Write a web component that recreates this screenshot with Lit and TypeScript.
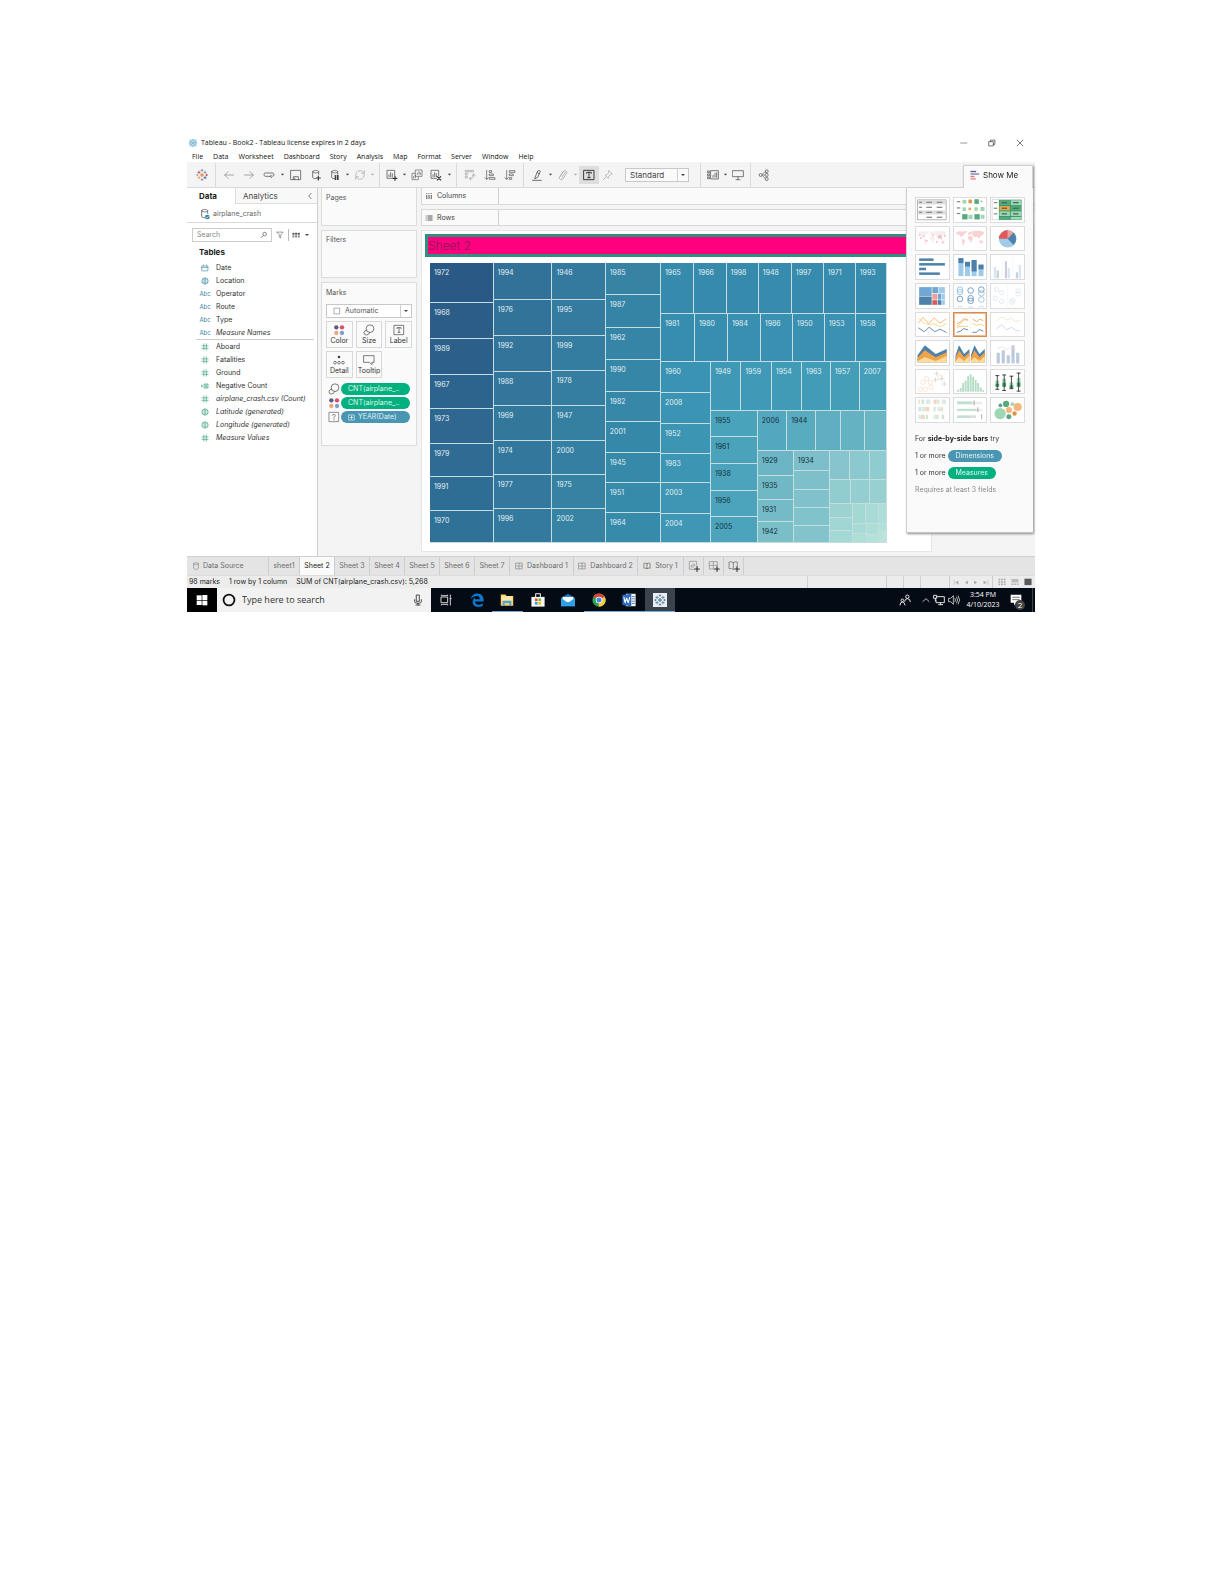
import { LitElement, html, svg, css, nothing, TemplateResult, SVGTemplateResult } from "lit";
import { customElement, state } from "lit/decorators.js";
import { classMap } from "lit/directives/class-map.js";

const G = "#5a5a5a";
const line = (d: string, stroke = G, w = 1) =>
  svg`<path d=${d} fill="none" stroke=${stroke} stroke-width=${w} stroke-linecap="round" stroke-linejoin="round"/>`;
const rect = (x: number, y: number, w: number, h: number, fill: string) =>
  svg`<rect x=${x} y=${y} width=${w} height=${h} fill=${fill}/>`;
const dot = (x: number, y: number, r: number, fill: string) =>
  svg`<circle cx=${x} cy=${y} r=${r} fill=${fill}/>`;
const ring = (x: number, y: number, r: number, stroke: string, w = 2) =>
  svg`<circle cx=${x} cy=${y} r=${r} fill="none" stroke=${stroke} stroke-width=${w}/>`;

const plusMark = (x: number, y: number, r: number, c: string, w = 2) =>
  line(`M${x - r} ${y}H${x + r}M${x} ${y - r}V${y + r}`, c, w);

const tableauMark = (mono?: string) => svg`
  ${plusMark(18, 18, 5, mono ?? "#e8762c", 3)}
  ${plusMark(9, 10, 3.5, mono ?? "#c72035", 2)}${plusMark(27, 10, 3.5, mono ?? "#5b879b", 2)}
  ${plusMark(9, 26, 3.5, mono ?? "#eb912c", 2)}${plusMark(27, 26, 3.5, mono ?? "#1f457e", 2)}
  ${plusMark(18, 4, 2.5, mono ?? "#5b6591", 2)}${plusMark(18, 32, 2.5, mono ?? "#5b6591", 2)}
  ${plusMark(4, 18, 2.5, mono ?? "#7099a6", 2)}${plusMark(32, 18, 2.5, mono ?? "#c72035", 2)}`;

const cylinder = svg`${line("M8 8v17c0 3 5 4 9 4M26 8v8M8 8c0-5 18-5 18 0s-18 5-18 0", G, 2.4)}`;
const chartFrame = svg`${line("M26 21V4H3v24h17M9 23v-6M14 23V11M19 23v-9", G, 2.4)}`;

/* Glyphs on a 36-unit square. */
const glyphs: Record<string, SVGTemplateResult> = {
  tableau: tableauMark(),
  tableauBlue: svg`${rect(0, 0, 36, 36, "#d9edf6")}${tableauMark("#3f93bd")}`,
  tableauWhite: svg`${rect(0, 0, 36, 36, "#e9eef2")}<g transform="translate(3 3) scale(.84)">${tableauMark("#3a6a8c")}</g>`,
  back: line("M32 18H5M15 8L5 18l10 10", "#999", 2.6),
  forward: line("M4 18h27M21 8l10 10-10 10", "#999", 2.6),
  redo: line("M24 22H7q-4 0-4-5t4-5h22q4 0 4 5t-4 5M26 18l-4 4 4 4", G, 2.4),
  save: svg`${line("M3 4h29v28H3zM10 32v-9h15v9M14 32v-5", G, 2.4)}`,
  dbPlus: svg`${cylinder}${plusMark(25, 27, 6, "#333", 3.4)}`,
  dbPause: svg`${cylinder}${rect(17, 18, 5, 15, "#444")}${rect(24, 18, 5, 15, "#444")}`,
  refresh: svg`${line("M5 20C3 4 24 0 30 12M31 16c2 16-19 20-25 8M31 5v8h-8M5 31v-8h8", "#aaa", 2.2)}`,
  chartPlus: svg`${chartFrame}${plusMark(27, 28, 6, "#333", 3.4)}`,
  chartClear: svg`${chartFrame}${line("M22 23l10 10M32 23L22 33", "#333", 3.4)}`,
  duplicate: svg`${line("M14 3h19v19H14zM12 13H3v19h19v-8M8 27v-5M13 27v-8M19 16v-4M24 16V8M28 16v-5", G, 2)}`,
  swap: svg`${line("M5 4h5v5H5zM14 4h5v5h-5zM23 4h5v5h-5zM5 13h5v5H5zM5 22h5v5H5z", "#999", 1.8)}${line("M29 16q3 12-12 13M25 20l4-5 5 5M21 25l-5 4 5 4", "#999", 2)}`,
  sortAsc: svg`${line("M8 4v27M3 26l5 5 5-5M17 5h6v5h-6zM17 15h11v5H17zM17 26h16v5H17z", G, 2.2)}`,
  sortDesc: svg`${line("M8 4v27M3 26l5 5 5-5M17 5h16v5H17zM17 15h11v5H17zM17 26h6v5h-6z", G, 2.2)}`,
  highlight: svg`${line("M12 26L20 6q4-4 8 1l-8 18-8 4zM19 11l6 3M5 34h26", G, 2.6)}`,
  clip: svg`${line("M10 22L20 6q7-4 10 4L18 30q-8 5-12-3L18 8M15 25l10-15", "#aaa", 2.4)}`,
  text: svg`${line("M3 4h30v28H3z", "#333", 2.8)}${line("M11 13v-3h14v3M18 10v16M14 26h8", "#333", 2.8)}`,
  pin: svg`${line("M20 5l11 10-5 1-6 6-1 6-10-9 6-2 5-6zM12 24l-8 8", "#aaa", 2.2)}`,
  fit: svg`${line("M2 6h6v5H2zM2 15h6v5H2zM2 24h6v5H2zM12 5h22v25H12zM18 25v-6M24 25V13M29 25V11", G, 2.4)}`,
  present: svg`${line("M2 5h32v18H2zM18 23v9M12 32h12", G, 2.4)}`,
  share: svg`${line("M12 18h8M14 15l8-7M14 21l8 7", G, 2)}${ring(8, 18, 4.5, G, 2.4)}${[3, 14, 26].map((y) => svg`<rect x="22" y=${y} width="8" height="8" rx="2" fill="none" stroke=${G} stroke-width="2.4"/>`)}`,
  caret: svg`<path d="M9 14h18l-9 9z" fill="#444"/>`,
  caretLight: svg`<path d="M9 14h18l-9 9z" fill="#aaa"/>`,
  chevron: line("M23 6L12 18l11 12", "#444", 3),
  source: svg`${cylinder}${dot(25, 27, 7, "#2f7f9f")}${line("M22 27l2 3 5-6", "#fff", 2)}`,
  search: svg`${ring(21, 14, 8, "#555", 3)}${line("M15 20L5 30", "#555", 3)}`,
  filter: line("M4 5h28L21 18v14l-6-4V18z", "#555", 2.5),
  grid: svg`${[0, 1, 2].map((i) => rect(2 + i * 12, 8, 9, 9, "#555"))}${[0, 1, 2].map((i) => rect(2 + i * 12, 20, 9, 9, "#888"))}`,
  date: svg`${line("M5 9h26v22H5zM5 16h26M11 4v5M25 4v5", "#4a8fa8", 3)}`,
  geoBlue: svg`${ring(18, 18, 14, "#3c87a5", 3)}${line("M5 13h26M5 23h26M15 5v26M21 5v26", "#3c87a5", 2)}`,
  geoGreen: svg`${ring(18, 18, 14, "#3fa57c", 3)}${line("M5 13h26M5 23h26M15 5v26M21 5v26", "#3fa57c", 2)}`,
  hash: line("M13 4v28M24 4v28M4 13h28M4 24h28", "#3fa57c", 3),
  calcHash: svg`${line("M18 6v24M27 6v24M11 13h24M11 23h24", "#3fa57c", 3)}${line("M0 18h7M3 14v8", "#3fa57c", 3)}`,
  color: svg`${dot(10, 10, 6.5, "#5d5b85")}${dot(27, 10, 6.5, "#d94f6b")}${dot(10, 27, 6.5, "#efa377")}${dot(27, 27, 6.5, "#7d9fc9")}`,
  size: svg`${line("M11 18Q4 19 3 26q0 7 7 7 8 0 10-7", G, 2.4)}${ring(21, 14, 11.5, G, 2.4)}`,
  label: svg`${line("M4 4h28v28H4z", G, 2.4)}${line("M12 14v-3h12v3M18 11v14M15 25h6", G, 2.4)}`,
  detail: svg`${dot(18, 9, 4, "#444")}${ring(6, 26, 4, G, 2.4)}${ring(18, 26, 4, G, 2.4)}${ring(30, 26, 4, G, 2.4)}`,
  tooltip: line("M3 5h30v20h-6v7l-8-7H3z", G, 2.4),
  columns: svg`${[6, 16, 26].map((x) => svg`${rect(x, 5, 4, 4, "#444")}${rect(x, 13, 4, 19, "#444")}`)}`,
  rows: svg`${[7, 16, 25].map((y) => svg`${rect(3, y, 4, 4, "#444")}${rect(11, y, 23, 4, "#444")}`)}`,
  bars: svg`${rect(2, 3, 20, 5, "#5b5f8c")}${rect(2, 12, 31, 5, "#7d83ad")}${rect(2, 21, 14, 5, "#e2706e")}${rect(2, 30, 19, 4, "#e2706e")}`,
  dashboard: line("M4 5h28v26H4zM18 5v26M4 18h28", "#777", 2.5),
  story: line("M18 8v22M18 8Q10 2 4 6v22q8-2 14 2 6-4 14-2V6q-8-4-14 2", "#555", 2.8),
  newSheet: svg`${line("M26 16V4H4v24h14M10 22v-6M15 22V12M20 18v-5", "#888", 2)}${plusMark(27, 27, 7, "#333", 3.4)}`,
  newDash: svg`${line("M28 16V5H4v22h14M16 5v22M4 16h24", "#888", 2)}${plusMark(27, 27, 7, "#333", 3.4)}`,
  newStory: svg`${line("M16 8v20M16 8Q9 3 3 6v20q8-2 13 2M16 8q6-5 12-2v10", "#777", 2.5)}${plusMark(27, 27, 7, "#333", 3.4)}`,
  db: svg`${line("M7 8v20c0 6 22 6 22 0V8M7 8c0-6 22-6 22 0s-22 6-22 0", "#777", 2.5)}`,
  minimize: line("M3 18h28", "#444", 2.5),
  restore: line("M5 12h19v19H5zM11 12V5h20v19h-7", "#333", 3),
  close: line("M5 5l26 26M31 5L5 31", "#333", 3),
  windows: svg`${rect(2, 4, 15, 14, "#fff")}${rect(19, 3, 15, 15, "#fff")}${rect(2, 20, 15, 13, "#fff")}${rect(19, 20, 15, 14, "#fff")}`,
  cortana: ring(18, 18, 14, "#111", 4.6),
  mic: svg`${line("M14 3h8v19h-8zM8 17v6q0 5 10 5t10-5v-6M18 28v5M12 33h12", "#333", 2.6)}`,
  taskview: svg`${line("M4 9h19v17H4zM4 3v2h19V3M4 33v-2h19v2M31 3v6M31 17v16", "#eee", 2.6)}${rect(29, 11, 5, 5, "#eee")}`,
  edge: svg`<path d="M2 16C4 6 11 1 19 1c10 0 16 7 16 18v3H13c0 6 4 8 10 8 4 0 7-1 10-3v6c-3 2-8 3-12 3C11 36 6 29 7 22c0-5 3-9 7-11-1 2-2 3-2 5h13c0-5-2-8-7-8C12 8 6 11 2 16z" fill="#0b78d0"/>`,
  folder: svg`<path d="M2 4h12l3 4h17v25H2z" fill="#f3cf6b"/>${rect(4, 8, 28, 12, "#fbe7a3")}<path d="M7 33V20h22v13h-5v-7H12v7z" fill="#4ba3d8"/>`,
  store: svg`<path d="M1 10h34v25H1z" fill="#f7f7f7"/>${line("M12 10V2h12v8", "#f7f7f7", 2.6)}${rect(10, 14, 7, 7, "#e8502f")}${rect(19, 14, 7, 7, "#7cb82f")}${rect(10, 23, 7, 7, "#2a9fe0")}${rect(19, 23, 7, 7, "#f5b81c")}`,
  mail: svg`<path d="M0 13L18 2l18 11v21H0z" fill="#1477c4"/><path d="M4 10h28v14H4z" fill="#fff"/><path d="M0 13l18 12 18-12v21H0z" fill="#2ba0e6"/>`,
  chrome: svg`${dot(18, 18, 17, "#2da04f")}<path d="M18 18L3.300 9.500A17 17 0 0 1 32.700 9.500z" fill="#dc4437"/><path d="M18 18L32.700 9.500A17 17 0 0 1 17 35z" fill="#f9cb3c"/>${dot(18, 18, 8.5, "#fff")}${dot(18, 18, 6.5, "#4285e8")}`,
  word: svg`${rect(10, 2, 25, 32, "#f5f8fc")}${[8, 14, 20, 26].map((y) => rect(26, y, 7, 2, "#2b579a"))}<path d="M1 5l23-3v32L1 31z" fill="#2b6cc0"/>${line("M5 11l3 14 4-12 4 12 4-14", "#fff", 2.8)}`,
  people: svg`${ring(25, 8, 5, "#eee", 2.8)}${line("M17 22q0-8 8-8 9 0 9 9", "#eee", 2.8)}${ring(10, 19, 4, "#eee", 2.8)}${line("M3 33q0-9 7-9t8 9", "#eee", 2.8)}`,
  up: line("M4 25L18 12l14 13", "#eee", 3.4),
  monitor: svg`${line("M12 8h22v18H9V18M17 32h12M22 26v6M3 4h8v9H3zM7 13v8", "#eee", 2.8)}`,
  sound: svg`${line("M3 13h5l8-8v26l-8-8H3zM21 13q4 5 0 10M26 9q6 9 0 18M31 6q8 12 0 24", "#ddd", 2.4)}`,
  first: svg`${line("M6 8v20", "#aaa", 3)}<path d="M28 8v20L12 18z" fill="#aaa"/>`,
  prev: svg`<path d="M25 8v20L10 18z" fill="#aaa"/>`,
  next: svg`<path d="M11 8v20l15-10z" fill="#aaa"/>`,
  last: svg`${line("M30 8v20", "#aaa", 3)}<path d="M8 8v20l16-10z" fill="#aaa"/>`,
  viewGrid: svg`${[3, 14, 25].map((y) => [2, 14, 26].map((x) => rect(x, y, 8, 7, "#aaa")))}`,
  viewStrip: svg`${rect(2, 4, 32, 16, "#bbb")}${[2, 14, 26].map((x) => rect(x, 25, 8, 6, "#aaa"))}`,
  viewFull: rect(2, 3, 32, 29, "#5a5a5a"),
  checkbox: line("M6 5h24v26H6z", "#777", 2.6),
  boxed: svg`${line("M4 4h28v28H4z", "#777", 2.4)}${line("M13 13q1-4 6-3 5 2 2 6l-3 3v3M18 26v1", "#666", 2.4)}`,
  expand: svg`${line("M4 5h28v26H4z", "#fff", 3)}${line("M11 18h14M18 11v14", "#fff", 3.4)}`,
};

const icon = (name: string, size = "m") =>
  html`<svg class="icon ${size}" viewBox="0 0 36 36" aria-hidden="true">${glyphs[name]}</svg>`;

/* Chart-type thumbnails, drawn on a 104 x 76 canvas. */
const BL = "#4e81a8", LB = "#a0cbe8", OR = "#f2a24a", RD = "#e15759", GN = "#59a77f", LG = "#9fd6b4";
const tiny = (x: number, y: number, w: number, c = "#888") => rect(x, y, w, 4, c);
const worldPath = "M6 18q10-6 22-3l10-3 4 4-8 6-6 8-6 2-4-6-8-2zM26 38l9 4-2 10-4 8-4-10zM44 20l8-6 6 4-4 6-8 2zM45 30l12-1 3 8-6 14-5-8-5-5zM58 14q18-5 38 2l-4 10-8 4-4 8-6-7-8 2-8-8zM80 44l10-1 3 8-10 2z";
const area = (x: number, w: number) => svg`
  <path d="M${x} 46L${x + w * .25} 14 ${x + w * .62} 42 ${x + w} 26V68H${x}z" fill=${BL}/>
  <path d="M${x} 54L${x + w * .25} 30 ${x + w * .62} 52 ${x + w} 36V68H${x}z" fill=${OR}/>
  <path d="M${x} 64L${x + w * .25} 52 ${x + w * .62} 64 ${x + w} 48V68H${x}z" fill="#fbdc9a"/>`;

interface ChartType { name: string; art: SVGTemplateResult; selected?: boolean; }
const chartTypes: ChartType[] = [
  { name: "Text table", art: svg`${line("M6 6h90v64H6z", "#888", 2)}${rect(7, 8, 88, 13, "#ddd")}${rect(7, 40, 88, 13, "#ddd")}
    ${[12, 28, 44, 60].map((y) => svg`${y < 60 ? tiny(10, y, 9) : nothing}${tiny(33, y, 18)}${tiny(66, y, 18)}`)}` },
  { name: "Heat map", art: svg`${[10, 30, 48].map((y) => tiny(9, y, 11))}
    ${rect(27, 6, 12, 12, LG)}${rect(46, 5, 11, 12, "#df9440")}${rect(65, 4, 14, 15, GN)}${rect(84, 8, 7, 6, LG)}
    ${rect(27, 30, 11, 12, LG)}${rect(46, 31, 8, 8, OR)}${rect(65, 30, 11, 11, LG)}${rect(84, 29, 13, 13, LG)}
    ${rect(26, 52, 17, 17, GN)}${rect(46, 54, 13, 14, LG)}${rect(65, 52, 17, 17, GN)}${rect(85, 54, 12, 13, LG)}` },
  { name: "Highlight table", art: svg`${line("M5 5h92v65H5z", "#bbb", 1.5)}${rect(25, 6, 72, 64, "#396")}${rect(27, 7, 33, 16, GN)}${rect(63, 7, 33, 16, LG)}${rect(27, 26, 33, 14, OR)}${rect(63, 26, 33, 14, GN)}${rect(27, 43, 33, 15, LG)}${rect(63, 43, 33, 15, LG)}${rect(27, 61, 33, 8, GN)}${rect(63, 61, 33, 8, LG)}
    ${[13, 31, 49].map((y) => svg`${tiny(9, y, 11)}${tiny(34, y, 17, "#3b6b52")}${tiny(70, y, 18, "#3b6b52")}`)}` },
  { name: "Symbol map", art: svg`<path d=${worldPath} fill="#f7eeee"/>${[[12, 26], [24, 30], [34, 44], [54, 26], [72, 34], [76, 30], [80, 37], [92, 28], [85, 50], [66, 48], [16, 36]].map(([x, y], i) => dot(x, y, i === 5 ? 5 : 3, "#f2b8bd"))}` },
  { name: "Filled map", art: svg`<path d=${worldPath} fill="#f9d3d3"/>` },
  { name: "Pie chart", art: svg`${dot(53, 38, 28, LB)}<path d="M53 38V10a28 28 0 0 1 19 8z" fill="#f39c98"/><path d="M53 38L72 18a28 28 0 0 1 0 40z" fill=${BL}/><path d="M53 38H25A28 28 0 0 1 53 10z" fill=${RD}/>` },
  { name: "Horizontal bars", art: svg`${rect(10, 11, 46, 8, BL)}${rect(10, 26, 82, 8, BL)}${rect(10, 41, 22, 8, BL)}${rect(10, 56, 66, 8, BL)}` },
  { name: "Stacked bars", art: svg`${rect(14, 10, 16, 58, LB)}${rect(14, 10, 16, 16, BL)}${rect(35, 22, 16, 46, LB)}${rect(35, 22, 16, 15, BL)}${rect(56, 16, 16, 52, LB)}${rect(56, 16, 16, 37, BL)}${rect(78, 31, 16, 37, LB)}${rect(78, 31, 16, 15, BL)}` },
  { name: "Side-by-side bars", art: svg`${line("M35 6v68M69 6v68", "#e6e6e6", 1)}${[[9, 38, 0], [18, 50, 1], [44, 20, 1], [53, 42, 0], [79, 56, 1], [88, 32, 0]].map(([x, y, d]) => rect(x, y, 7, 75 - y, d ? "#c6cfdb" : "#d5e6f2"))}` },
  { name: "Treemap", art: svg`${rect(10, 10, 40, 30, "#6fa8d2")}${rect(10, 41, 40, 26, BL)}${rect(52, 10, 19, 19, "#6fa8d2")}${rect(73, 10, 19, 19, LB)}${rect(52, 31, 15, 19, "#f39c98")}${rect(69, 31, 12, 19, "#6fa8d2")}${rect(83, 31, 9, 19, LB)}${rect(52, 52, 15, 15, RD)}${rect(69, 52, 12, 15, BL)}${rect(83, 52, 9, 15, LB)}` },
  { name: "Circle views", art: svg`${[[19, 18, 0], [19, 26, 0], [19, 48, 1], [53, 21, 1], [53, 46, 1], [53, 54, 1], [87, 18, 1], [87, 30, 0], [87, 50, 0]].map(([x, y, d]) => ring(x, y, 9, d ? "#5a8fba" : "#8fbbdc", 2.6))}${line("M12 74q7-7 14 0M46 76q7-7 14 0M80 74q7-7 14 0", LB, 2)}` },
  { name: "Side-by-side circles", art: svg`${line("M53 6v66", "#e3e3e3", 1)}${[[18, 18], [34, 28], [14, 46], [34, 56], [70, 52], [86, 22], [86, 32], [66, 58]].map(([x, y]) => ring(x, y, 7, "#d3dfea", 2))}` },
  { name: "Continuous lines", art: svg`${line("M8 32l14-18 18 20 18-18 18 16 20-12", "#f0a85a", 2.4)}${line("M8 16l14 14q14 10 24 6t22 4 28-6", "#f6cf6c", 2.4)}${line("M8 48l18 12 16-14 18 14 16-8 20 10", "#4f74b8", 2.6)}` },
  { name: "Discrete lines", selected: true, art: svg`${line("M53 8v62", "#ddd", 1)}
    ${line("M10 34l12-6 10-10 12 4M60 20l12 8 10-8 10 4", "#e0954a", 2.4)}${line("M10 42q10-4 16-14t18-4M60 34l12 6 10-4 12 4M10 46q14-6 34-3", "#f2c360", 2.4)}${line("M10 62l12-4 8-8 14 4M60 62l12 0 8-9 12 5", "#4a6fa8", 2.6)}` },
  { name: "Dual lines", art: svg`${line("M18 24l16-12 18 10 14-6 12 12 14-4", "#f6dcc4", 2.4)}${line("M18 50l16-12 16 16 16-8 14 10 12 2", "#c3cfe4", 2.4)}` },
  { name: "Continuous area", art: area(5, 93) },
  { name: "Discrete area", art: svg`${area(5, 44)}${area(54, 44)}` },
  { name: "Dual combination", art: svg`${[[18, 38], [34, 30], [50, 46], [65, 14], [80, 38]].map(([x, y]) => rect(x, y, 10, 72 - y, "#bcc9da"))}${line("M20 24l16-6 14 10 16-10 12 10", "#f3dccb", 2.4)}` },
  { name: "Scatter plot", art: svg`${[[22, 40], [34, 28], [14, 62], [30, 62], [46, 40], [48, 56], [78, 24]].map(([x, y]) => ring(x, y, 7, "#fbd6bf", 2))}${[[66, 12], [62, 32], [82, 28], [90, 45]].map(([x, y]) => plusMark(x, y, 7, "#ccc", 2))}` },
  { name: "Histogram", art: svg`${[6, 12, 28, 36, 50, 56, 48, 38, 28, 14, 6].map((h, i) => rect(10 + i * 8, 70 - h, 6, h, "#b3dcc5"))}` },
  { name: "Box-and-whisker", art: svg`${[[20, 34, 54, 18, 62], [42, 28, 54, 16, 66], [65, 40, 58, 20, 60], [88, 26, 54, 10, 68]].map(([x, a, b, c, d]) => svg`${rect(x - 6, a, 12, (b - a) / 2, LG)}${rect(x - 6, (a + b) / 2, 12, (b - a) / 2, "#3f9a6d")}${line(`M${x} ${c}V${d}M${x - 5} ${c}h10M${x - 5} ${d}h10`, "#333", 2.8)}`)}` },
  { name: "Gantt", art: svg`${[5, 29, 54].map((y, r) => [8, 18, 32, 56, 68, 82].map((x, i) => rect(x, y, [4, 8, 14, 10, 6, 14][(i + r) % 6], 14, (i + r) % 3 === 0 ? "#f9d3bb" : (i + r) % 3 === 1 ? "#c9e6d6" : "#dcebe3")))}` },
  { name: "Bullet graph", art: svg`${rect(10, 12, 80, 8, "#ececec")}${rect(10, 11, 48, 9, "#bfe0cf")}${rect(10, 35, 80, 8, "#ececec")}${rect(10, 35, 62, 6, "#bfe0cf")}${rect(10, 56, 60, 8, "#dcdcdc")}${rect(10, 57, 40, 6, "#bfe0cf")}${line("M64 9v13M76 31v13M88 54v13", "#777", 2)}` },
  { name: "Packed bubbles", art: svg`${dot(29, 50, 18, LG)}${dot(30, 24, 6, GN)}${dot(48, 19, 10, GN)}${dot(68, 20, 6, LG)}${dot(85, 29, 13, "#f6b77d")}${dot(57, 39, 10, "#f6b77d")}${dot(75, 50, 7, "#df9440")}${dot(57, 60, 8, GN)}` },
];

/* Treemap tree: a leaf has a label and a tone, a branch splits into rows or columns. */
interface Node { size: number; label?: string; tone?: string; dark?: boolean; dir?: "row" | "col"; kids?: Node[]; }

const mix = (a: number[], b: number[], t: number) =>
  `rgb(${a.map((v, i) => Math.round(v + (b[i] - v) * t)).join(",")})`;

const strip = (dir: "row" | "col", size: number, labels: string, sizes: number[], from: number[], to: number[], dark = false): Node => {
  const names = labels.split(" ");
  return {
    dir, size,
    kids: sizes.map((s, i) => ({ size: s, label: names[i] ?? "", tone: mix(from, to, sizes.length > 1 ? i / (sizes.length - 1) : 0), dark })),
  };
};
const branch = (dir: "row" | "col", size: number, ...kids: Node[]): Node => ({ dir, size, kids });

const treemap: Node = branch("row", 1,
  strip("col", 191, "1972 1968 1989 1967 1973 1979 1991 1970", [120, 108, 108, 104, 103, 99, 102, 97], [43, 89, 133], [48, 114, 151]),
  strip("col", 177, "1994 1976 1992 1988 1969 1974 1977 1996", [110, 109, 108, 103, 104, 102, 104, 101], [50, 114, 152], [52, 122, 158]),
  strip("col", 160, "1946 1995 1999 1978 1947 2000 1975 2002", [110, 109, 105, 105, 105, 102, 104, 101], [52, 122, 158], [54, 131, 164]),
  strip("col", 166, "1985 1987 1962 1990 1982 2001 1945 1951 1964", [96, 99, 96, 95, 91, 93, 91, 89, 91], [54, 131, 164], [54, 139, 171]),
  branch("col", 679,
    strip("row", 153, "1965 1966 1998 1948 1997 1971 1993", [99, 98, 97, 99, 96, 96, 94], [54, 139, 172], [55, 140, 173]),
    strip("row", 143, "1981 1980 1984 1986 1950 1953 1958", [102, 99, 99, 96, 96, 93, 94], [55, 141, 174], [58, 146, 178]),
    branch("row", 544,
      strip("col", 150, "1960 2008 1952 1983 2003 2004", [93, 93, 90, 87, 93, 88], [58, 147, 178], [63, 151, 181]),
      branch("col", 529,
        strip("row", 147, "1949 1959 1954 1963 1957 2007", [91, 92, 90, 87, 87, 82], [63, 152, 181], [69, 159, 184]),
        branch("row", 397,
          strip("col", 141, "1955 1961 1938 1956 2005", [79, 80, 81, 78, 79], [73, 163, 187], [76, 164, 188], true),
          branch("col", 388,
            strip("row", 120, "2006 1944", [88, 86, 76, 71, 67], [83, 168, 191], [106, 181, 195], true),
            branch("row", 277,
              strip("col", 108, "1929 1935 1931 1942", [75, 72, 66, 64], [108, 181, 196], [122, 190, 200], true),
              strip("col", 108, "1934", [60, 57, 54, 54, 52], [124, 190, 201], [131, 196, 204], true),
              branch("col", 172,
                strip("row", 87, "", [60, 60, 52], [134, 197, 205], [143, 204, 207]),
                strip("row", 72, "", [63, 57, 52], [145, 204, 207], [152, 208, 209]),
                branch("row", 118,
                  strip("col", 69, "", [42, 39, 37], [156, 211, 209], [164, 216, 212]),
                  branch("col", 103,
                    strip("row", 61, "", [39, 39, 25], [163, 216, 211], [172, 221, 214]),
                    branch("row", 57,
                      strip("col", 43, "", [29, 28], [168, 219, 213], [174, 223, 215]),
                      strip("col", 35, "", [32, 25], [172, 222, 214], [178, 226, 217]),
                      branch("col", 25,
                        strip("row", 25, "", [25], [176, 225, 216], [176, 225, 216]),
                        strip("row", 25, "", [14, 11], [180, 227, 218], [184, 230, 220]),
                        strip("row", 7, "", [25], [186, 231, 221], [186, 231, 221])))))))))))));

@customElement("tree-map")
class TreeMap extends LitElement {
  static styles = css`
    :host { display: flex; }
    .branch { display: flex; flex-basis: 0; min-width: 0; min-height: 0; }
    .col { flex-direction: column; }
    .leaf { flex-basis: 0; min-width: 0; min-height: 0; overflow: hidden; box-shadow: inset -1px -1px 0 #c3dde0; font-size: 7px; line-height: 10px; color: #e0eef2; }
    .leaf span { display: block; padding: 5px 0 0 4px; }
    .dark { color: #16323c; }
  `;
  private draw(n: Node): TemplateResult {
    return n.kids
      ? html`<div class="branch ${n.dir}" style="flex-grow:${n.size}">${n.kids.map((k) => this.draw(k))}</div>`
      : html`<div class=${classMap({ leaf: true, dark: !!n.dark })} style="flex-grow:${n.size};background:${n.tone}">${n.label ? html`<span>${n.label}</span>` : nothing}</div>`;
  }
  render() { return this.draw(treemap); }
}

@customElement("show-me")
class ShowMe extends LitElement {
  static styles = css`
    :host { display: flex; flex-direction: column; align-items: flex-end; filter: drop-shadow(1px 1px 1px #8a8a8a); }
    button { font: inherit; color: inherit; margin: 0; padding: 0; border: 0; background: none; }
    .tab { display: flex; align-items: center; gap: 3px; box-sizing: border-box; width: 70px; height: 23px; padding: 0 6px 4px; background: #fafafa; border: 1px solid #d0d0d0; border-bottom: 0; font-size: 8px; color: #222; white-space: nowrap; }
    .tab svg { width: 10px; height: 10px; }
    .panel { box-sizing: border-box; width: 127px; height: 345px; padding: 9px 8px; background: #fafafa; border-left: 1px solid #d0d0d0; border-bottom: 1px solid #c4c4c4; }
    .types { display: grid; grid-template-columns: repeat(3, 1fr); grid-template-rows: repeat(8, 1fr); gap: 3px; width: 110px; height: 226px; }
    .type { display: flex; background: #fff; border: 1px solid #dcdcdc; min-height: 0; }
    .type svg { width: 100%; height: 100%; }
    .selected { border-color: #d98a4e; outline: 1px solid #eebc94; outline-offset: -2px; }
    p { margin: 0; font-size: 7px; line-height: 17px; color: #333; white-space: nowrap; }
    .first { padding-top: 7px; }
    b { color: #222; }
    .pill { display: inline-block; padding: 0 8px; border-radius: 6px; line-height: 12px; color: #e8f4f4; background: #4996b2; }
    .measure { background: #00b180; }
    .note { color: #8a8a8a; }
  `;
  render() {
    return html`
      <button class="tab" type="button"><svg viewBox="0 0 36 36" aria-hidden="true">${glyphs.bars}</svg>Show Me</button>
      <div class="panel">
        <div class="types">
          ${chartTypes.map((t) => html`<button type="button" class=${classMap({ type: true, selected: !!t.selected })} aria-label=${t.name}>
            <svg viewBox="0 0 104 76" preserveAspectRatio="none" aria-hidden="true">${t.art}</svg></button>`)}
        </div>
        <p class="first">For <b>side-by-side bars</b> try</p>
        <p>1 or more <span class="pill">Dimensions</span></p>
        <p>1 or more <span class="pill measure">Measures</span></p>
        <p class="note">Requires at least 3 fields</p>
      </div>`;
  }
}

const menus = ["File", "Data", "Worksheet", "Dashboard", "Story", "Analysis", "Map", "Format", "Server", "Window", "Help"];

/* "|" is a separator, a leading "-" marks a narrow button, "v" and "vl" are drop-down arrows. */
const tools: [string, string][] = [
  ["tableau", "Start page"], ["|", ""], ["back", "Undo"], ["forward", "Redo"], ["redo", "Replay"], ["v", "Replay options"],
  ["save", "Save"], ["dbPlus", "New data source"], ["-dbPause", "Pause auto updates"], ["v", "Update options"], ["-refresh", "Run update"], ["vl", "Run options"],
  ["|", ""], ["-chartPlus", "New worksheet"], ["v", "New options"], ["-duplicate", "Duplicate"], ["chartClear", "Clear sheet"], ["v", "Clear options"],
  ["|", ""], ["swap", "Swap rows and columns"], ["sortAsc", "Sort ascending"], ["sortDesc", "Sort descending"],
  ["|", ""], ["highlight", "Highlight"], ["v", "Highlight options"], ["-clip", "Group members"], ["vl", "Group options"], ["text", "Show mark labels"], ["-pin", "Fix axes"],
];
const toolsEnd: [string, string][] = [["|", ""], ["-fit", "Show/hide cards"], ["v", "Card options"], ["-present", "Presentation mode"], ["|", ""], ["share", "Share"]];

interface Field { icon: string; name: string; italic?: boolean; }
const dimensions: Field[] = [
  { icon: "date", name: "Date" }, { icon: "geoBlue", name: "Location" }, { icon: "abc", name: "Operator" },
  { icon: "abc", name: "Route" }, { icon: "abc", name: "Type" }, { icon: "abc", name: "Measure Names", italic: true },
];
const measures: Field[] = [
  { icon: "hash", name: "Aboard" }, { icon: "hash", name: "Fatalities" }, { icon: "hash", name: "Ground" },
  { icon: "calcHash", name: "Negative Count" }, { icon: "hash", name: "airplane_crash.csv (Count)", italic: true },
  { icon: "geoGreen", name: "Latitude (generated)", italic: true }, { icon: "geoGreen", name: "Longitude (generated)", italic: true },
  { icon: "hash", name: "Measure Values", italic: true },
];
const sheets = ["sheet1", "Sheet 2", "Sheet 3", "Sheet 4", "Sheet 5", "Sheet 6", "Sheet 7"];
const apps: [string, string, boolean][] = [
  ["taskview", "Task view", false], ["edge", "Edge", false], ["folder", "File Explorer", true], ["store", "Store", false],
  ["mail", "Mail", false], ["chrome", "Chrome", true], ["word", "Word", true], ["tableauWhite", "Tableau", true],
];

@customElement("app-root")
class AppRoot extends LitElement {
  @state() private activeSheet = "Sheet 2";

  static styles = css`
    :host { display: block; box-sizing: border-box; min-height: 100vh; padding: 136px 189px 0 187px; background: #fff; font-family: Inter, "Open Sans", sans-serif; font-size: 7px; line-height: 10px; color: #444; }
    * { box-sizing: border-box; }
    button, input, select { font: inherit; color: inherit; margin: 0; padding: 0; border: 0; border-radius: 0; background: none; }
    select, input { appearance: none; outline: 0; width: 0; min-width: 0; }
    svg { display: block; flex: none; }
    .icon { width: 12px; height: 12px; }
    .xs { width: 7px; height: 7px; }
    .s { width: 8px; height: 8px; }
    .l { width: 14px; height: 14px; }
    .system { font-family: "Open Sans", "Noto Sans", sans-serif; color: #111; }

    .title { display: flex; align-items: center; height: 14px; padding: 0 6px 0 2px; gap: 4px; }
    .title span { flex: 1; }
    .winctl { display: flex; width: 74px; justify-content: space-between; }
    .winctl button { padding: 3px 5px; }
    .menu { display: flex; height: 12px; padding: 1px 0 0 5px; gap: 10px; align-items: center; }

    .toolbar { display: flex; align-items: center; height: 26px; padding-left: 5px; background: #f4f4f4; border-bottom: 1px solid #dadada; }
    .tool { display: grid; place-items: center; width: 20px; height: 18px; }
    .narrow { width: 18px; }
    .drop { width: 7px; }
    .on { background: #dedede; }
    .sep { width: 7px; height: 24px; display: flex; justify-content: center; }
    .sep::before { content: ""; width: 1px; background: #dadada; }
    .combo { display: flex; align-items: center; border: 1px solid #c8c8c8; height: 14px; background: #fff; }
    .combo select { flex: 1; height: 12px; padding-left: 4px; }
    .combo .arrow { display: grid; flex: none; place-items: center; width: 11px; height: 12px; border-left: 1px solid #d0d0d0; }
    .standard { width: 64px; margin: 0 8px; background: #fafafa; font-size: 8px; }

    .work { position: relative; display: flex; height: 368px; background: #f4f4f4; }
    show-me { position: absolute; right: 2px; top: -23px; }

    .data { width: 131px; background: #fff; border-right: 1px solid #cfcfcf; }
    .tabs { display: flex; height: 16px; font-size: 8px; }
    .tabs button { width: 48px; padding-right: 6px; font-weight: 700; color: #222; text-align: center; }
    .tabs .second { flex: 1; display: flex; align-items: center; justify-content: space-between; padding: 0 3px 0 7px; font-weight: 400; background: #f8f8f8; border-left: 1px solid #ddd; border-bottom: 1px solid #ddd; color: #444; }
    .source { display: flex; align-items: center; gap: 2px; width: 100%; height: 19px; padding: 1px 0 0 12px; border-bottom: 1px solid #dadada; color: #666; }
    .find { display: flex; align-items: center; gap: 4px; padding: 5px 0 0 5px; }
    .searchbox { display: flex; align-items: center; width: 80px; height: 14px; border: 1px solid #ccc; padding: 0 3px 0 4px; }
    .searchbox input { flex: 1; }
    .searchbox input::placeholder { color: #888; opacity: 1; }
    .viewas { display: flex; align-items: center; gap: 3px; padding-left: 3px; height: 12px; border-left: 1px solid #bbb; }
    h2 { margin: 0; padding: 5px 0 4px 12px; font-size: 8px; line-height: 10px; font-weight: 700; color: #222; }
    ul { list-style: none; margin: 0; padding: 0; }
    .field { display: flex; align-items: center; width: 100%; height: 13px; padding-left: 12px; gap: 5px; white-space: nowrap; color: #333; }
    .field .kind { display: grid; place-items: center; width: 12px; font-size: 6px; color: #3c87a5; }
    .italic { font-style: italic; }
    .measures { margin: 0 3px 0 9px; border-top: 1px solid #ccc; }
    .measures .field { padding-left: 3px; }

    .cards { display: flex; flex-direction: column; gap: 4px; width: 102px; padding: 0 3px; }
    .card { height: 48px; padding: 4px; border: 1px solid #dcdcdc; background: #fafafa; color: #555; }
    .pages { height: 38px; padding-top: 5px; border-top: 0; }
    .marks { height: 164px; padding-top: 5px; }
    .marks .combo { margin: 6px 0 3px; }
    .marks .combo > svg { margin-left: 6px; }
    .shelf-grid { display: grid; grid-template-columns: repeat(3, 1fr); gap: 3px; padding-bottom: 5px; }
    .mark { display: flex; flex-direction: column; align-items: center; justify-content: space-between; height: 27px; padding: 2px 0 1px; border: 1px solid #d8d8d8; color: #333; }
    .assign { display: flex; align-items: center; gap: 1px; padding: 0 2px 2px; }
    .pill { display: flex; flex: 1; align-items: center; gap: 3px; height: 12px; padding: 0 7px; border-radius: 6px; background: #00b180; color: #e0f6ee; line-height: 12px; white-space: nowrap; }
    .blue { background: #4996b2; color: #e4f1f5; }

    .main { flex: 1; min-width: 0; padding-left: 1px; }
    .shelf { display: flex; height: 17px; margin-bottom: 4px; border: 1px solid #d8d8d8; border-right: 0; background: #fafafa; color: #444; }
    .columns { border-top: 0; }
    .shelf div { display: flex; align-items: center; gap: 4px; width: 77px; padding-left: 3px; border-right: 1px solid #d0d0d0; }
    .sheet { margin-right: 103px; height: 322px; padding: 3px 0 9px 3px; background: #fff; border: 1px solid #e6e6e6; }
    .heading { margin: 0; height: 23px; border: 3px solid #2f907f; border-right: 0; background: #ff007f; color: #831a52; font-size: 12px; font-weight: 300; line-height: 17px; }
    tree-map { height: 280px; margin: 6px 44px 0 5px; }

    .sheets { display: flex; height: 19px; background: #e4e4e4; border-top: 1px solid #cfcfcf; color: #6c6c6c; }
    .sheets button { display: flex; align-items: center; justify-content: center; gap: 4px; width: 35px; border-right: 1px solid #cdcdcd; white-space: nowrap; }
    .sheets .ds { width: 82px; justify-content: flex-start; padding-left: 5px; gap: 3px; }
    .sheets .narrowtab { width: 31px; }
    .sheets .dash { width: 64px; }
    .sheets .storytab { width: 46px; }
    .sheets .new { width: 20px; }
    .sheets .active { background: #fafafa; color: #222; }
    .status { display: flex; align-items: center; height: 13px; padding: 0 3px 0 2px; gap: 9px; background: #ececec; border-top: 1px solid #ddd; color: #222; }
    .status .fill { flex: 1; }
    .cells { display: flex; height: 12px; }
    .cells i { width: 17px; border-left: 1px solid #d0d0d0; }
    .cells .wide { width: 79px; }
    .cells .mid { width: 29px; }
    .pager { display: flex; align-items: center; width: 44px; padding: 0 3px; height: 12px; margin-left: -9px; justify-content: space-between; border-left: 1px solid #ccc; border-right: 1px solid #ccc; }
    .views { display: flex; gap: 5px; margin-left: -4px; }

    .taskbar { display: flex; height: 24px; background: #050b14; }
    .start { display: grid; place-items: center; width: 30px; background: #000; }
    .typehere { display: flex; align-items: center; gap: 6px; width: 214px; padding: 0 7px 0 5px; background: #f2f2f2; font-size: 9px; }
    .typehere input { flex: 1; }
    .typehere input::placeholder { color: #333; opacity: 1; }
    .apps { display: flex; width: 244px; }
    .apps button { display: grid; place-items: center; flex: 1; }
    .running { box-shadow: inset 0 -1px 0 #76a9d6; }
    .front { background: #3a424c; }
    .tray { display: flex; flex: 1; align-items: center; justify-content: flex-end; gap: 3px; color: #eee; }
    .tray .gap { margin-right: 8px; }
    .clock { width: 40px; text-align: center; color: #fff; }
    .note { position: relative; width: 27px; height: 24px; padding: 6px 0 0 4px; margin-right: 2px; border-right: 1px solid #444; }
    .count { position: absolute; left: 9px; top: 12px; width: 10px; height: 10px; border-radius: 5px; background: #444; color: #fff; font-size: 8px; line-height: 10px; text-align: center; }
  `;

  private tool = ([name, label]: [string, string]) => {
    if (name === "|") return html`<span class="sep"></span>`;
    if (name === "v" || name === "vl") return html`<button type="button" class="tool drop" aria-label=${label}>${icon(name === "v" ? "caret" : "caretLight", "xs")}</button>`;
    const narrow = name.startsWith("-");
    const key = narrow ? name.slice(1) : name;
    return html`<button type="button" class=${classMap({ tool: true, narrow, on: key === "text" })} aria-label=${label}>${icon(key)}</button>`;
  };

  private field = (f: Field) => html`<li><button type="button" class="field">
    <span class="kind">${f.icon === "abc" ? "Abc" : icon(f.icon, "s")}</span><span class=${f.italic ? "italic" : ""}>${f.name}</span></button></li>`;

  render() {
    return html`
      <header class="system">
        <div class="title">${icon("tableauBlue", "s")}<span>Tableau - Book2 - Tableau license expires in 2 days</span>
          <div class="winctl">${["minimize", "restore", "close"].map((n) => html`<button type="button" aria-label=${n}>${icon(n, "s")}</button>`)}</div>
        </div>
        <nav class="menu">${menus.map((m) => html`<button type="button">${m}</button>`)}</nav>
      </header>
      <div class="toolbar">
        ${tools.map(this.tool)}
        <span class="combo standard"><select aria-label="Fit"><option>Standard</option></select><span class="arrow">${icon("caret", "s")}</span></span>
        ${toolsEnd.map(this.tool)}
      </div>
      <div class="work">
        <aside class="data">
          <div class="tabs"><button type="button">Data</button><button type="button" class="second">Analytics ${icon("chevron", "s")}</button></div>
          <button type="button" class="source">${icon("source")}airplane_crash</button>
          <div class="find">
            <label class="searchbox"><input type="text" placeholder="Search" aria-label="Search fields">${icon("search", "s")}</label>
            <button type="button" aria-label="Filter fields">${icon("filter", "s")}</button>
            <button type="button" class="viewas" aria-label="View as">${icon("grid", "s")}${icon("caret", "s")}</button>
          </div>
          <h2>Tables</h2>
          <ul>${dimensions.map(this.field)}</ul>
          <ul class="measures">${measures.map(this.field)}</ul>
        </aside>
        <section class="cards">
          <div class="card pages">Pages</div>
          <div class="card">Filters</div>
          <div class="card marks">Marks
            <div class="combo">${icon("checkbox", "s")}<select aria-label="Mark type"><option>Automatic</option></select><span class="arrow">${icon("caret", "s")}</span></div>
            <div class="shelf-grid">${[["color", "Color"], ["size", "Size"], ["label", "Label"], ["detail", "Detail"], ["tooltip", "Tooltip"]].map(
              ([i, l]) => html`<button type="button" class="mark">${icon(i)}${l}</button>`)}</div>
            <div class="assign">${icon("size")}<span class="pill">CNT(airplane_..</span></div>
            <div class="assign">${icon("color")}<span class="pill">CNT(airplane_..</span></div>
            <div class="assign">${icon("boxed")}<span class="pill blue">${icon("expand", "xs")}YEAR(Date)</span></div>
          </div>
        </section>
        <main class="main">
          <div class="shelf columns"><div>${icon("columns", "s")}Columns</div></div>
          <div class="shelf"><div>${icon("rows", "s")}Rows</div></div>
          <div class="sheet"><h1 class="heading">Sheet 2</h1><tree-map></tree-map></div>
        </main>
        <show-me></show-me>
      </div>
      <nav class="sheets">
        <button type="button" class="ds">${icon("db", "s")}Data Source</button>
        ${sheets.map((s, i) => html`<button type="button" class=${classMap({ narrowtab: i === 0, active: s === this.activeSheet })} @click=${() => (this.activeSheet = s)}>${s}</button>`)}
        <button type="button" class="dash">${icon("dashboard", "s")}Dashboard 1</button>
        <button type="button" class="dash">${icon("dashboard", "s")}Dashboard 2</button>
        <button type="button" class="storytab">${icon("story", "s")}Story 1</button>
        <button type="button" class="new" aria-label="New worksheet">${icon("newSheet")}</button>
        <button type="button" class="new" aria-label="New dashboard">${icon("newDash")}</button>
        <button type="button" class="new" aria-label="New story">${icon("newStory")}</button>
      </nav>
      <div class="status">
        <span>98 marks</span><span>1 row by 1 column</span><span>SUM of CNT(airplane_crash.csv): 5,268</span><span class="fill"></span>
        <div class="cells"><i class="wide"></i><i></i><i></i><i class="mid"></i></div>
        <div class="pager">${["first", "prev", "next", "last"].map((n) => html`<button type="button" aria-label=${n}>${icon(n, "xs")}</button>`)}</div>
        <div class="views">${["viewGrid", "viewStrip", "viewFull"].map((n) => html`<button type="button" aria-label=${n}>${icon(n, "s")}</button>`)}</div>
      </div>
      <footer class="taskbar system">
        <button type="button" class="start" aria-label="Start">${icon("windows")}</button>
        <label class="typehere">${icon("cortana", "l")}<input type="text" placeholder="Type here to search" aria-label="Type here to search">${icon("mic")}</label>
        <div class="apps">${apps.map(([n, label, running], i) => html`<button type="button" aria-label=${label} class=${classMap({ running, front: i === 7 })}>${icon(n, i ? "l" : "m")}</button>`)}</div>
        <div class="tray"><span class="gap">${icon("people")}</span>${icon("up", "s")}${icon("monitor")}${icon("sound")}
          <div class="clock">3:54 PM<br>4/10/2023</div>
          <div class="note"><svg class="icon" viewBox="0 0 36 36" aria-hidden="true"><path d="M2 2h32v24H20l-8 8v-8H2z" fill="#fff"/>${line("M8 10h20M8 17h20", "#333", 2)}</svg><span class="count">2</span></div>
        </div>
      </footer>`;
  }
}
